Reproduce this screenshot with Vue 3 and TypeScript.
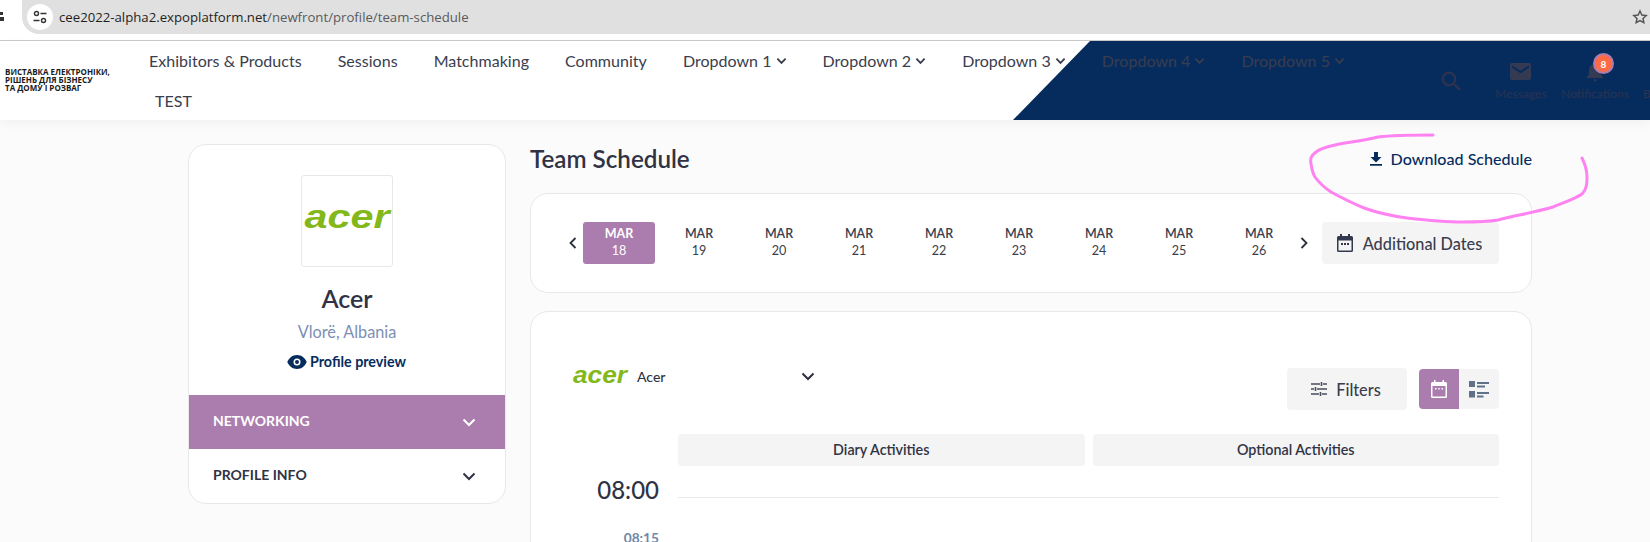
<template>
  <div class="page">
    <div class="browser-bar">
      <svg class="reload-bit" width="5" height="14" viewBox="0 0 5 14"><path d="M0 2h3v3H0zM0 7h4v4H0z" fill="#333" /></svg>
      <div class="url-pill">
        <span class="site-btn">
          <svg width="16" height="14" viewBox="0 0 16 14" fill="none" stroke="#333" stroke-width="1.4">
            <circle cx="4.5" cy="3.5" r="2" /><path d="M8.5 3.5h6M1.5 10.5h6" /><circle cx="11.5" cy="10.5" r="2" />
          </svg>
        </span>
        <span class="url"><b>cee2022-alpha2.expoplatform.net</b>/newfront/profile/team-schedule</span>
        <svg class="star" width="16" height="16" viewBox="0 0 24 24" fill="none" stroke="#555" stroke-width="2.2">
          <path d="M12 3l2.8 6 6.5.7-4.8 4.4 1.3 6.4L12 17.3l-5.8 3.2 1.3-6.4-4.8-4.4 6.5-.7z" />
        </svg>
      </div>
    </div>

    <header class="site-header">
      <div class="header-shape"></div>
      <div class="logo-text">ВИСТАВКА ЕЛЕКТРОНІКИ,<br />РІШЕНЬ ДЛЯ БІЗНЕСУ<br />ТА ДОМУ І РОЗВАГ</div>
      <nav class="main-nav">
        <a v-for="item in navItems" :key="item.label" class="nav-item" :class="{ short: item.label === 'TEST' }">
          {{ item.label }}
          <svg v-if="item.drop" class="nav-arrow" width="11" height="8" viewBox="0 0 12 8" fill="none" stroke="currentColor" stroke-width="2"><path d="M1.5 1.5L6 6l4.5-4.5" /></svg>
        </a>
      </nav>
      <div class="header-actions">
        <svg class="search-icon" width="24" height="24" viewBox="0 0 24 24" fill="none" stroke="#2c3350" stroke-width="2.4">
          <circle cx="10" cy="10" r="6.2" /><path d="M14.6 14.6L21 21" />
        </svg>
        <div class="action">
          <svg width="22" height="18" viewBox="0 0 22 18">
            <rect width="21" height="17" rx="2" fill="#333a52" />
            <path d="M2 3.5l8.5 5.5L19 3.5" fill="none" stroke="#062c5e" stroke-width="2" />
          </svg>
          <span>Messages</span>
        </div>
        <div class="action">
          <svg width="18" height="22" viewBox="0 0 18 22" fill="#333a52">
            <path d="M9 1a1.5 1.5 0 0 1 1.5 1.5v.6C13.500 3.900 15 6.500 15 9.500v4l2 2.500v1H1v-1l2-2.500v-4c0-3 1.500-5.600 4.500-6.400v-.6A1.500 1.500 0 0 1 9 1zM7 18.500h4L9 21z" />
          </svg>
          <span class="badge">8</span>
          <span>Notifications</span>
        </div>
        <div class="action cut"><span>B</span></div>
      </div>
    </header>

    <main class="content">
      <aside class="profile-card">
        <div class="profile-top">
          <div class="logo-box">
            <svg class="acer big" width="86" height="30" viewBox="0 0 86 30"><text x="43" y="22" text-anchor="middle" textLength="85" lengthAdjust="spacingAndGlyphs">acer</text></svg>
          </div>
          <h2>Acer</h2>
          <p class="place">Vlorë, Albania</p>
          <a class="preview">
            <svg width="20" height="14" viewBox="0 0 20 14">
              <path d="M10 0C5.500 0 2 2.800 0.300 7 2 11.200 5.500 14 10 14s8-2.800 9.700-7C18 2.800 14.500 0 10 0z" fill="#062c5e" />
              <circle cx="10" cy="7" r="3.500" fill="#fff" /><circle cx="10" cy="7" r="2" fill="#062c5e" />
            </svg>
            Profile preview
          </a>
        </div>
        <div class="side-row active">
          <span>NETWORKING</span>
          <svg width="14" height="9" viewBox="0 0 14 9" fill="none" stroke="currentColor" stroke-width="2"><path d="M1.500 1.500L7 7l5.500-5.500" /></svg>
        </div>
        <div class="side-row">
          <span>PROFILE INFO</span>
          <svg width="14" height="9" viewBox="0 0 14 9" fill="none" stroke="currentColor" stroke-width="2"><path d="M1.500 1.500L7 7l5.500-5.500" /></svg>
        </div>
      </aside>

      <section class="schedule">
        <div class="title-row">
          <h1>Team Schedule</h1>
          <a class="download">
            <svg width="12" height="14" viewBox="0 0 12 14" fill="#062c5e"><path d="M4 0h4v5h3.500L6 10.500.5 5H4zM0 12h12v1.800H0z" /></svg>
            Download Schedule
          </a>
        </div>

        <div class="card dates-card">
          <svg class="arrow" width="8" height="12" viewBox="0 0 8 12" fill="none" stroke="#2c2f3d" stroke-width="1.800"><path d="M6.500 1L1.500 6l5 5" /></svg>
          <div class="dates">
            <div v-for="(d, i) in days" :key="d" class="date" :class="{ on: i === 0 }">
              <strong>MAR</strong>
              <span>{{ d }}</span>
            </div>
          </div>
          <svg class="arrow next" width="8" height="12" viewBox="0 0 8 12" fill="none" stroke="#2c2f3d" stroke-width="1.800"><path d="M1.500 1l5 5-5 5" /></svg>
          <button class="grey-btn additional">
            <svg width="16" height="18" viewBox="0 0 16 18" fill="#333a4d">
              <path d="M3 0h2v2h6V0h2v2h1.500A1.500 1.500 0 0 1 16 3.500v13a1.500 1.500 0 0 1-1.500 1.500h-13A1.500 1.500 0 0 1 0 16.500v-13A1.500 1.500 0 0 1 1.500 2H3zM1.500 6.500v10h13v-10zM4 9h2v2H4zM7 9h2v2H7zM10 9h2v2h-2z" />
            </svg>
            Additional Dates
          </button>
        </div>

        <div class="card main-card">
          <div class="toolbar">
            <div class="team-select">
              <svg class="acer small" width="56" height="20" viewBox="0 0 56 20"><text x="28" y="17" text-anchor="middle" textLength="54" lengthAdjust="spacingAndGlyphs">acer</text></svg>
              <span class="team-name">Acer</span>
              <svg class="select-arrow" width="14" height="9" viewBox="0 0 14 9" fill="none" stroke="#2c2f3d" stroke-width="2"><path d="M1.500 1.500L7 7l5.500-5.500" /></svg>
            </div>
            <div class="tools">
              <button class="grey-btn filters">
                <svg width="16" height="16" viewBox="0 0 16 16" fill="none" stroke="#4a4d5c" stroke-width="1.600">
                  <path d="M0 3h9M12 3h4M10.500 1v4M0 8h3M6 8h10M4.500 6v4M0 13h8M11 13h5M9.500 11v4" />
                </svg>
                Filters
              </button>
              <div class="view-toggle">
                <span class="view on">
                  <svg width="16" height="18" viewBox="0 0 16 18" fill="#fff">
                    <path d="M3 0h1.500v2h7V0H13v2h1.500A1.500 1.500 0 0 1 16 3.500v13a1.500 1.500 0 0 1-1.500 1.500h-13A1.500 1.500 0 0 1 0 16.500v-13A1.500 1.500 0 0 1 1.500 2H3z" />
                    <rect x="1.500" y="6" width="13" height="10.500" fill="#ab7dae" />
                    <path d="M4 8h1.500v1.500H4zM7.200 8h1.500v1.500H7.200zM10.500 8H12v1.500h-1.500z" />
                  </svg>
                </span>
                <span class="view">
                  <svg width="20" height="17" viewBox="0 0 20 17" fill="#5f7188">
                    <path d="M0 0h6v6H0zM8 1h12v2H8zM8 4.500h8v2H8zM0 10h6v6.500H0zM8 11h12v2H8zM8 14.500h6.500v2H8z" />
                  </svg>
                </span>
              </div>
            </div>
          </div>

          <div class="columns">
            <div class="col-head">Diary Activities</div>
            <div class="col-head">Optional Activities</div>
          </div>

          <div class="time-row">
            <span class="hour">08:00</span>
            <span class="line"></span>
          </div>
          <div class="quarter">08:15</div>
        </div>
      </section>
    </main>

    <svg class="scribble" width="1650" height="542" viewBox="0 0 1650 542" fill="none">
      <path d="M1433 135C1415 135 1395 135 1378 137C1362 141 1350 142 1335 145C1325 147 1320 149 1316 152C1311 156 1310 158 1311 164C1312 170 1313 174 1315 177C1320 184 1325 188 1331 192C1342 198 1352 203 1364 208C1378 213 1392 216 1407 218C1425 220 1443 222 1462 222C1475 222 1486 222 1498 220C1518 215 1536 212 1553 207C1565 202 1575 199 1582 194C1587 189 1587 183 1587 177C1587 170 1585 164 1582 158" stroke="#ff82f1" stroke-width="3" stroke-linecap="round" />
    </svg>
  </div>
</template>

<script setup lang="ts">
const navItems = [
  { label: 'Exhibitors & Products' },
  { label: 'Sessions' },
  { label: 'Matchmaking' },
  { label: 'Community' },
  { label: 'Dropdown 1', drop: true },
  { label: 'Dropdown 2', drop: true },
  { label: 'Dropdown 3', drop: true },
  { label: 'Dropdown 4', drop: true },
  { label: 'Dropdown 5', drop: true },
  { label: 'TEST' },
]

const days = [18, 19, 20, 21, 22, 23, 24, 25, 26]
</script>

<style>
html,
body {
  margin: 0;
  overflow: hidden;
}
</style>

<style scoped>
.page {
  position: relative;
  width: 1650px;
  height: 542px;
  overflow: hidden;
  background: #fbfbfb;
  font-family: Lato, "Liberation Sans", sans-serif;
  color: #2f3344;
}

.browser-bar {
  display: flex;
  height: 40px;
  background: #fff;
  border-bottom: 1px solid #c9c9c9;
}

.reload-bit {
  margin-top: 10px;
}

.url-pill {
  display: flex;
  align-items: center;
  flex: 1;
  height: 34px;
  margin-left: 17px;
  padding-left: 5px;
  padding-right: 2px;
  background: #e0e0e0;
  border-bottom-left-radius: 17px;
}

.site-btn {
  display: flex;
  align-items: center;
  justify-content: center;
  width: 26px;
  height: 26px;
  margin-right: 6px;
  border-radius: 50%;
  background: #fff;
}

.url {
  flex: 1;
  font-family: "Open Sans", sans-serif;
  font-size: 13.2px;
  color: #5a5a5a;
}

.url b {
  font-weight: 400;
  color: #1f1f1f;
}

.site-header {
  position: relative;
  display: flex;
  height: 79px;
  background: #fff;
  box-shadow: 0 4px 10px rgba(0, 0, 0, 0.04);
}

.header-shape {
  position: absolute;
  top: 0;
  right: 0;
  bottom: 0;
  left: 1013px;
  background: #062c5e;
  clip-path: polygon(77px 0, 100% 0, 100% 100%, 0 100%);
}

.logo-text {
  position: relative;
  flex: none;
  width: 126px;
  padding: 27px 0 0 5px;
  font-family: "Open Sans", sans-serif;
  font-size: 8px;
  font-weight: 700;
  line-height: 8px;
  white-space: nowrap;
  color: #1b1b1b;
}

.main-nav {
  position: relative;
  display: flex;
  flex-wrap: wrap;
  align-content: flex-start;
  flex: none;
  width: 1280px;
  margin-top: -1px;
}

.nav-item {
  display: flex;
  align-items: center;
  gap: 4px;
  height: 40px;
  padding: 0 18px;
  font-size: 16px;
  letter-spacing: 0.03px;
  color: #3a3d4d;
}

.nav-arrow {
  margin-top: 1px;
}

.nav-item.short {
  padding: 0 24px;
}

.header-actions {
  position: relative;
  display: flex;
  align-items: flex-start;
  flex: none;
  padding-top: 20px;
  color: #2c3350;
}

.search-icon {
  flex: none;
  margin: 8px 0 0 28px;
}

.action {
  position: relative;
  display: flex;
  flex: none;
  flex-direction: column;
  align-items: center;
  gap: 3px;
  font-size: 12px;
  margin-left: 14px;
  width: 60px;
}

.action:nth-of-type(1) {
  margin-left: 28px;
}

.action svg {
  height: 22px;
}

.action.cut {
  align-items: flex-start;
  margin-left: 18px;
  padding-top: 25px;
  width: 10px;
}

.badge {
  position: absolute;
  top: -8px;
  left: 28px;
  display: flex;
  align-items: center;
  justify-content: center;
  width: 17px;
  height: 17px;
  border: 2px solid #ab7dae;
  border-radius: 50%;
  background: #ff6a45;
  color: #fff;
  font-size: 10px;
  font-weight: 700;
}

.content {
  display: flex;
  align-items: flex-start;
  gap: 24px;
  padding: 24px 118px 0 188px;
}

.profile-card {
  flex: none;
  width: 316px;
  overflow: hidden;
  background: #fff;
  border: 1px solid #e8e8e8;
  border-radius: 18px;
}

.profile-top {
  display: flex;
  flex-direction: column;
  align-items: center;
  height: 250px;
  padding-top: 30px;
  box-sizing: border-box;
}

.logo-box {
  display: flex;
  align-items: center;
  justify-content: center;
  width: 92px;
  height: 92px;
  box-sizing: border-box;
  border: 1px solid #e8e8e8;
  border-radius: 3px;
}

.acer {
  overflow: visible;
}

.acer text {
  font-family: "Liberation Sans", sans-serif;
  font-style: italic;
  font-weight: 700;
  fill: #83b81a;
}

.acer.big text {
  font-size: 34px;
}

.acer.small {
  margin-left: -1px;
}

.acer.small text {
  font-size: 24px;
}

.profile-top h2 {
  margin: 15px 0 0;
  font-size: 25px;
  font-weight: 600;
  line-height: 32px;
}

.place {
  margin: 7px 0 0;
  font-size: 16.3px;
  line-height: 22px;
  color: #7d8fb3;
}

.preview {
  display: flex;
  align-items: center;
  gap: 3px;
  margin: 10px 1px 0 0;
  font-size: 14.3px;
  font-weight: 700;
  color: #062c5e;
}

.side-row {
  display: flex;
  align-items: center;
  justify-content: space-between;
  height: 54px;
  padding: 0 29px 0 24px;
  font-size: 14px;
  font-weight: 700;
}

.side-row span {
  margin-bottom: 4px;
}

.side-row.active {
  background: #ab7dae;
  color: #fff;
}

.schedule {
  flex: 1;
  min-width: 0;
}

.title-row {
  display: flex;
  align-items: center;
  justify-content: space-between;
  height: 29px;
}

h1 {
  margin: 0;
  font-size: 24.2px;
  font-weight: 600;
}

.download {
  display: flex;
  align-items: center;
  gap: 9px;
  font-size: 16.1px;
  font-weight: 500;
  color: #062c5e;
}

.card {
  background: #fff;
  border: 1px solid #e8e8e8;
  border-radius: 18px;
}

.dates-card {
  display: flex;
  align-items: center;
  height: 100px;
  margin-top: 20px;
  padding: 0 32px 0 38px;
  box-sizing: border-box;
}

.arrow {
  flex: none;
}

.dates {
  display: flex;
  flex: none;
  gap: 8px;
  margin-left: 6px;
}

.date {
  display: flex;
  flex-direction: column;
  align-items: center;
  justify-content: center;
  width: 72px;
  height: 42px;
  box-sizing: border-box;
  padding-bottom: 2px;
  border-radius: 3px;
  font-size: 12.5px;
  line-height: 17px;
  color: #3a3d4d;
}

.date strong {
  font-weight: 600;
}

.date span {
  font-size: 12.6px;
}

.date.on {
  background: #ab7dae;
  color: #fff;
}

.date.on strong {
  font-weight: 700;
}

.arrow.next {
  margin-left: 5px;
}

.grey-btn {
  display: flex;
  align-items: center;
  justify-content: center;
  height: 42px;
  padding: 0 2px 0 0;
  border: 0;
  border-radius: 4px;
  background: #f4f4f4;
  font-family: inherit;
  font-size: 16.3px;
  font-weight: 500;
  color: #3a3d4d;
}

.additional {
  flex: none;
  gap: 10px;
  width: 177px;
  margin-left: auto;
}

.main-card {
  height: 300px;
  margin-top: 18px;
  padding: 56px 32px 0 42px;
}

.toolbar {
  display: flex;
  justify-content: space-between;
}

.team-select {
  display: flex;
  align-items: center;
  height: 16px;
}

.team-name {
  margin-left: 9px;
  font-size: 14px;
  font-weight: 500;
}

.select-arrow {
  margin-left: 136px;
}

.tools {
  display: flex;
  align-items: center;
  gap: 12px;
}

.filters {
  gap: 9px;
  width: 120px;
}

.view-toggle {
  display: flex;
  overflow: hidden;
  border-radius: 4px;
}

.view {
  display: flex;
  align-items: center;
  justify-content: center;
  width: 40px;
  height: 40px;
  background: #f4f4f4;
}

.view.on {
  background: #ab7dae;
}

.columns {
  display: grid;
  grid-template-columns: 1fr 1fr;
  gap: 8px;
  margin: 24px 0 0 105px;
}

.col-head {
  height: 32px;
  border-radius: 4px;
  background: #f4f4f4;
  font-size: 14.3px;
  font-weight: 600;
  line-height: 32px;
  text-align: center;
}

.time-row {
  display: flex;
  align-items: flex-end;
  gap: 19px;
  height: 32px;
}

.hour {
  width: 86px;
  margin-bottom: -8px;
  font-size: 24px;
  font-weight: 500;
  line-height: 32px;
  text-align: right;
}

.line {
  flex: 1;
  height: 1px;
  background: #e8e8e8;
}

.quarter {
  width: 86px;
  margin-top: 31px;
  font-size: 13.7px;
  font-weight: 700;
  text-align: right;
  color: #6f87a8;
}

.scribble {
  position: absolute;
  top: 0;
  left: 0;
  pointer-events: none;
}
</style>
